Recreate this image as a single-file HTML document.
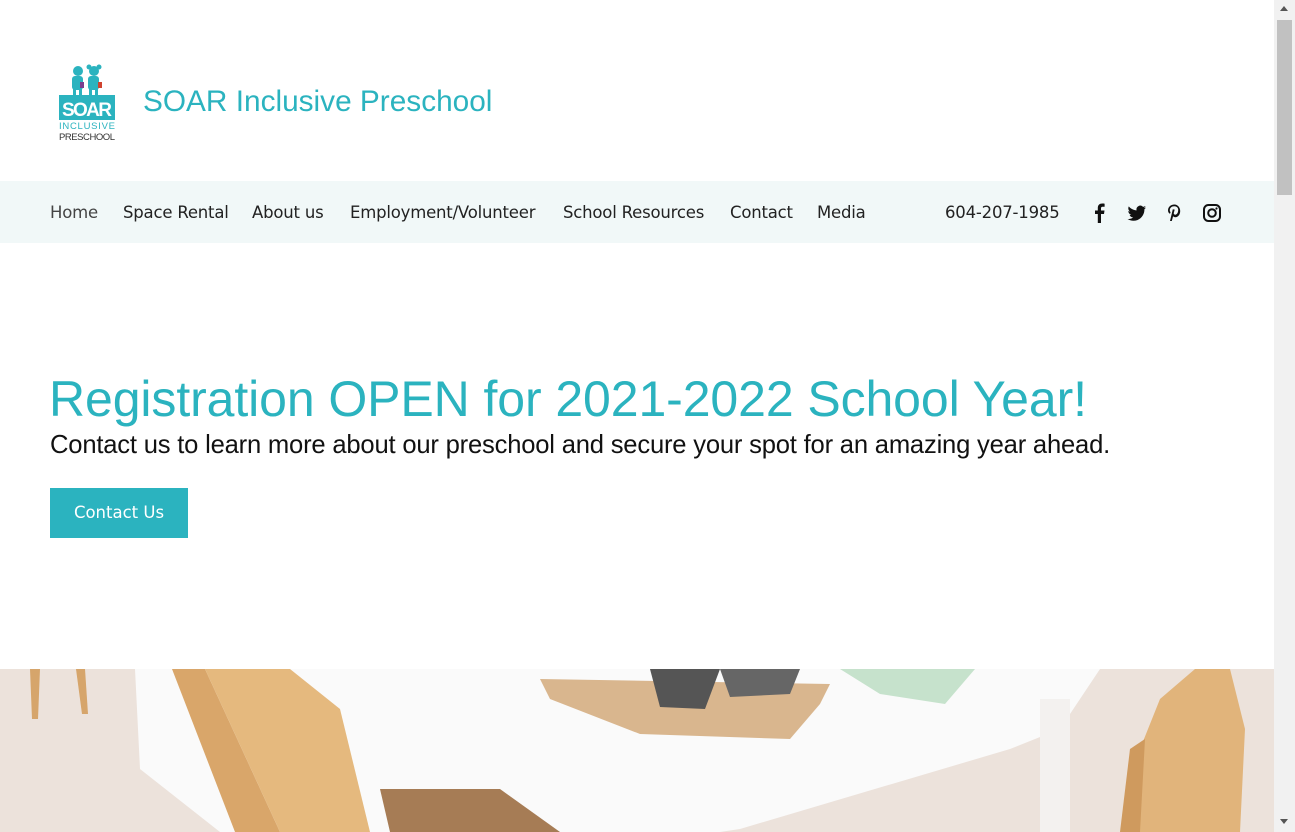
<!DOCTYPE html>
<html><head><meta charset="utf-8"><style>
body{margin:0;width:1295px;height:832px;overflow:hidden;background:#fff;font-family:"Liberation Sans",sans-serif;position:relative}
.abs{position:absolute}
.nav{position:absolute;left:0;top:181px;width:1274px;height:62px;background:#f1f8f8}
.nav span{position:absolute;top:22px;color:#222;font-family:"DejaVu Sans","Liberation Sans",sans-serif;font-size:16.5px;letter-spacing:-0.2px}
.sb{position:absolute;left:1274px;top:0;width:21px;height:832px;background:#f1f1f1}
</style></head><body>
<svg class="abs" style="left:56px;top:62px" width="64" height="82" viewBox="0 0 64 82">
<g fill="#2bb3bf"><circle cx="22" cy="9" r="5"/><rect x="16" y="14" width="11" height="14" rx="3"/><rect x="17" y="27" width="3" height="8"/><rect x="23" y="27" width="3" height="8"/>
<circle cx="38" cy="9" r="5"/><circle cx="33" cy="5" r="2.5"/><circle cx="43" cy="5" r="2.5"/><rect x="32" y="14" width="11" height="14" rx="3"/><rect x="33" y="27" width="3" height="8"/><rect x="39" y="27" width="3" height="8"/>
<rect x="3" y="33" width="56" height="25"/></g>
<rect x="24" y="20" width="4" height="6" fill="#7a3e8e"/><rect x="42" y="20" width="4" height="6" fill="#d0432f"/>
<text x="31" y="54" text-anchor="middle" font-family="Liberation Sans" font-weight="bold" font-size="19" textLength="50" fill="#fff">SOAR</text>
<text x="31" y="67" text-anchor="middle" font-family="Liberation Sans" font-size="9.5" textLength="56" fill="#2bb3bf">INCLUSIVE</text>
<text x="31" y="78" text-anchor="middle" font-family="Liberation Sans" font-size="9.5" textLength="56" fill="#333">PRESCHOOL</text>
</svg>
<div class="abs" style="left:143px;top:85px;font-size:29.8px;color:#2bb3bf">SOAR Inclusive Preschool</div>
<div class="nav">
<span style="left:50px;color:#444">Home</span><span style="left:123px">Space Rental</span><span style="left:252px">About us</span><span style="left:350px">Employment/Volunteer</span><span style="left:563px">School Resources</span><span style="left:730px">Contact</span><span style="left:817px">Media</span><span style="left:945px">604-207-1985</span>
<svg class="abs" style="left:1090px;top:22px" width="135" height="20" viewBox="0 0 135 20">
<path d="M11 20V11h3l.5-3.5H11V5.5c0-1 .3-1.7 1.8-1.7h1.8V.7C14.3.6 13.3.5 12.2.5 9.6.5 7.8 2 7.8 5v2.5H5V11h2.8v9z" fill="#111"/>
<path d="M56 4.5c-.7.3-1.4.5-2.2.6.8-.5 1.4-1.2 1.700-2.1-.7.4-1.600.8-2.400.9a3.8 3.8 0 0 0-6.500 3.500C43.500 7.200 40.700 5.700 38.800 3.400c-1 1.800-.5 4 1.200 5.100-.6 0-1.200-.2-1.700-.5 0 1.800 1.300 3.400 3 3.800-.6.2-1.200.2-1.700.1.5 1.500 1.900 2.600 3.600 2.600A7.700 7.700 0 0 1 37.500 16c1.700 1.100 3.700 1.700 5.900 1.700 7.100 0 11-5.900 11-11v-.5c.7-.5 1.300-1.200 1.600-1.700z" fill="#111"/>
<path d="M84.5 1.5c-4 0-6.5 2.700-6.500 5.900 0 1.600.8 3 2 3.400l.6-1.600c-.5-.5-.8-1.100-.8-1.900 0-2.300 1.800-4 4.500-4 2.400 0 3.900 1.500 3.900 3.600 0 2.700-1.200 4.800-3 4.800-1 0-1.700-.8-1.400-1.800l.9-3.300-1.900-.3-2.800 11.700h1.800l1.300-4.800c.5.600 1.300 1 2.200 1 2.900 0 4.900-2.800 4.900-6.200 0-3.600-2.700-6.500-5.700-6.500z" fill="#111"/>
<rect x="114" y="2" width="16" height="16" rx="4.5" fill="none" stroke="#111" stroke-width="2"/><circle cx="122" cy="10" r="3.8" fill="none" stroke="#111" stroke-width="2"/><circle cx="126.5" cy="5.5" r="1.1" fill="#111"/>
</svg>
</div>
<div class="abs" style="left:49px;top:370px;font-size:50px;color:#2bb3bf;letter-spacing:-0.1px">Registration OPEN for 2021-2022 School Year!</div>
<div class="abs" style="left:50px;top:431px;font-size:25.6px;color:#111;letter-spacing:-0.2px">Contact us to learn more about our preschool and secure your spot for an amazing year ahead.</div>
<div class="abs" style="left:50px;top:488px;width:138px;height:50px;background:#2bb3bf;color:#fff;font-family:'DejaVu Sans',sans-serif;font-size:16.5px;line-height:50px;text-align:center">Contact Us</div>
<svg class="abs" style="left:0;top:669px" width="1274" height="163" viewBox="0 0 1274 163">
<rect width="1274" height="163" fill="#ece2db"/>
<polygon points="30,0 40,0 38,50 32,50" fill="#d6a56b"/>
<polygon points="76,0 85,0 88,45 82,45" fill="#d6a56b"/>
<path d="M135 0H1100L1060 60 1010 80 740 160 720 163H220L140 100z" fill="#fafafa"/>
<rect x="1040" y="30" width="30" height="133" fill="#f3f1ef"/>
<polygon points="172,0 205,0 280,163 235,163" fill="#d9a66a"/>
<polygon points="205,0 290,0 340,40 370,163 280,163" fill="#e5b97e"/>
<polygon points="380,120 500,120 560,163 390,163" fill="#a67c55"/>
<polygon points="540,10 830,15 820,35 790,70 640,65 550,30" fill="#d9b68e"/>
<polygon points="650,0 720,0 705,40 660,38" fill="#555"/>
<polygon points="720,0 800,0 790,25 730,28" fill="#666"/>
<polygon points="840,0 975,0 945,35 880,25" fill="#c6e2cc"/>
<polygon points="1160,30 1195,0 1230,0 1245,60 1240,163 1130,163 1140,80" fill="#e1b47b"/>
<polygon points="1130,80 1145,70 1140,163 1120,163" fill="#cf9a5e"/>
</svg>
<div class="sb"><div style="position:absolute;left:3px;top:20px;width:15px;height:175px;background:#c1c1c1"></div>
<div style="position:absolute;left:6px;top:6px;width:0;height:0;border-left:4px solid transparent;border-right:4px solid transparent;border-bottom:5px solid #555"></div>
<div style="position:absolute;left:6px;top:819px;width:0;height:0;border-left:4px solid transparent;border-right:4px solid transparent;border-top:5px solid #555"></div></div>
</body></html>
